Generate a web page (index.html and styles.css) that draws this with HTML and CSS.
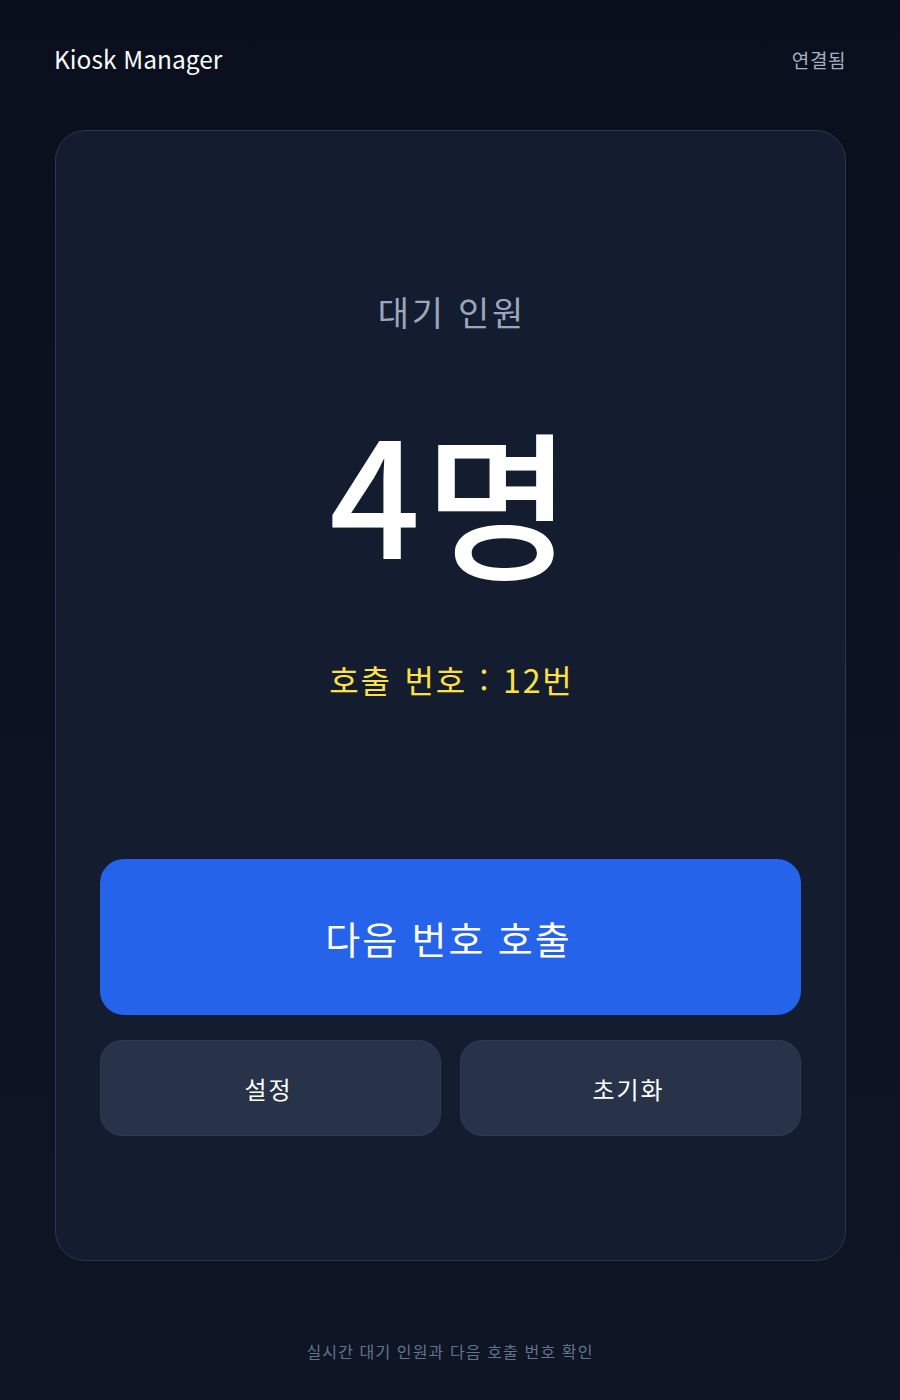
FILE: index.html
```html
<!DOCTYPE html>
<html lang="ko">
<head>
<meta charset="utf-8">
<title>Kiosk Manager</title>
<link rel="stylesheet" href="styles.css">
</head>
<body>
<div class="page">
  <header class="header">
    <div class="brand">Kiosk Manager</div>
    <div class="status">연결됨</div>
  </header>
  <main class="card">
    <div class="stats">
      <div class="label">대기 인원</div>
      <div class="count"><span class="count-num">4</span>명</div>
      <div class="call">호출 번호 : 12번</div>
    </div>
    <div class="actions">
      <button class="btn-primary">다음 번호 호출</button>
      <div class="sub-actions">
        <button class="btn-secondary">설정</button>
        <button class="btn-secondary">초기화</button>
      </div>
    </div>
  </main>
  <footer class="footer">실시간 대기 인원과 다음 호출 번호 확인</footer>
</div>
</body>
</html>
```
FILE: styles.css
```css
* { box-sizing: border-box; }
html, body { margin: 0; padding: 0; }
body {
  min-height: 1400px;
  background: linear-gradient(180deg, #0a0f1d 0%, #0e1525 100%);
  font-family: "Noto Sans CJK KR", "Noto Sans", sans-serif;
  color: #ffffff;
}
.page {
  padding: 38px 54px 0 54px;
}
.header {
  height: 42px;
  display: flex;
  align-items: center;
  justify-content: space-between;
}
.brand {
  font-size: 24.5px;
  color: #f8fafc;
  line-height: 1;
}
.status {
  font-size: 19px;
  letter-spacing: 0.03em;
  color: #a3b0c4;
  line-height: 1;
}
.card {
  margin-top: 50px;
  margin-left: 1px;
  height: 1131px;
  border: 1.5px solid #2a3652;
  border-radius: 30px;
  background: #141c30;
  padding: 160px 44px 0 44px;
}
.stats {
  display: flex;
  flex-direction: column;
  align-items: center;
}
.label {
  font-size: 34px;
  line-height: 41px;
  letter-spacing: 0.08em;
  padding-left: 0.08em;
  color: #9aa7bc;
}
.count {
  margin-top: 86px;
  font-size: 160px;
  line-height: 160px;
  font-weight: 500;
  color: #ffffff;
}
.count-num {
  display: inline-block;
  transform: translateY(-9px);
  margin-right: 4px;
}
.call {
  margin-top: 82px;
  font-size: 32px;
  line-height: 38px;
  letter-spacing: 0.06em;
  padding-left: 0.06em;
  word-spacing: 0.05em;
  color: #fde047;
}
.actions {
  margin-top: 161px;
  display: flex;
  flex-direction: column;
  gap: 25px;
}
.btn-primary {
  height: 156px;
  border: none;
  border-radius: 24px;
  background: #2563eb;
  color: #ffffff;
  font-family: inherit;
  font-size: 38px;
  letter-spacing: 0.05em;
  padding-left: 0.05em;
  font-weight: 400;
}
.sub-actions {
  display: grid;
  grid-template-columns: 1fr 1fr;
  gap: 19px;
}
.btn-secondary {
  height: 96px;
  border: 1px solid #2e3a54;
  border-radius: 22px;
  background: #28334a;
  color: #ffffff;
  font-family: inherit;
  font-size: 24px;
  letter-spacing: 0.08em;
  padding-left: 0.08em;
  font-weight: 400;
}
.footer {
  margin-top: 78px;
  text-align: center;
  font-size: 16px;
  line-height: 24px;
  letter-spacing: 0.07em;
  color: #64748b;
}
```
